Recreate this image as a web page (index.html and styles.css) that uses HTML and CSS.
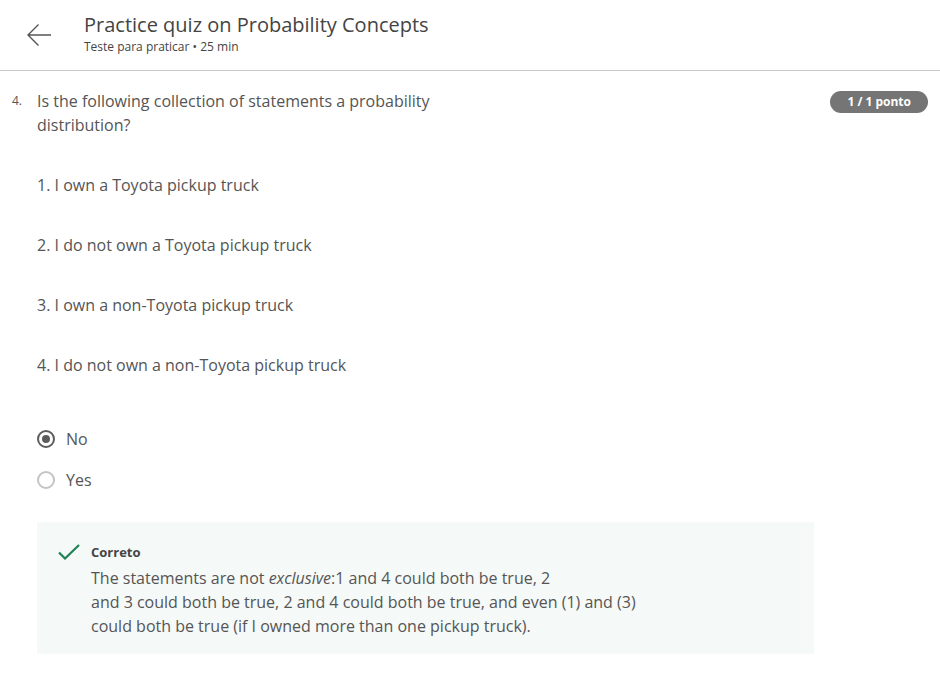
FILE: index.html
```html
<!DOCTYPE html>
<html>
<head>
<meta charset="utf-8">
<link rel="stylesheet" href="styles.css">
</head>
<body>
<header class="top">
  <button class="back" aria-label="Voltar">
    <svg width="26" height="24" viewBox="0 0 26 24"><path d="M25 12H2M12.5 1.5L2 12l10.5 10.5" fill="none" stroke="#555" stroke-width="1.4"/></svg>
  </button>
  <div class="titles">
    <h1 class="title">Practice quiz on Probability Concepts</h1>
    <div class="sub">Teste para praticar • 25 min</div>
  </div>
</header>
<main class="question">
  <div class="qhead">
    <span class="qnum">4.</span>
    <div class="qtext">Is the following collection of statements a probability<br>distribution?</div>
    <span class="badge">1 / 1 ponto</span>
  </div>
  <div class="qbody">
    <p class="stmt">1. I own a Toyota pickup truck</p>
    <p class="stmt">2. I do not own a Toyota pickup truck</p>
    <p class="stmt">3. I own a non-Toyota pickup truck</p>
    <p class="stmt">4. I do not own a non-Toyota pickup truck</p>
    <div class="options">
      <label class="opt"><span class="radio checked"></span><span>No</span></label>
      <label class="opt"><span class="radio"></span><span>Yes</span></label>
    </div>
    <div class="feedback">
      <svg class="check" width="22" height="16" viewBox="0 0 22 16"><path d="M1 8.5l6 6L21 1" fill="none" stroke="#1f8354" stroke-width="2.2"/></svg>
      <div class="fbtext">
        <div class="fbtitle">Correto</div>
        <div class="fbbody">The statements are not <em>exclusive</em>:1 and 4 could both be true, 2<br>and 3 could both be true, 2 and 4 could both be true, and even (1) and (3)<br>could both be true (if I owned more than one pickup truck).</div>
      </div>
    </div>
  </div>
</main>
</body>
</html>
```
FILE: styles.css
```css
html, body {
  margin: 0;
  padding: 0;
  background: #fff;
  font-family: "Open Sans", sans-serif;
  color: #555;
}
.top {
  display: flex;
  align-items: flex-start;
  height: 70px;
  border-bottom: 1px solid #c8c8c8;
}
.back {
  border: 0;
  background: none;
  padding: 0;
  margin: 23px 0 0 26px;
  width: 26px;
  height: 24px;
  display: flex;
}
.titles {
  margin: 11px 0 0 32px;
}
.title {
  margin: 0;
  font-size: 20px;
  font-weight: 400;
  line-height: 28px;
  color: #444;
}
.sub {
  font-size: 12px;
  line-height: 16px;
  color: #444;
  margin-top: 0;
}
.question {
  padding: 0 12px 0 12px;
}
.qhead {
  display: flex;
  align-items: flex-start;
  margin-top: 18px;
}
.qnum {
  width: 25px;
  font-size: 12px;
  line-height: 24px;
  color: #555;
  flex: none;
}
.qtext {
  flex: 1;
  font-size: 16px;
  line-height: 24px;
  color: #555;
}
.badge {
  flex: none;
  margin-top: 2px;
  background: #757575;
  color: #fff;
  font-size: 12px;
  font-weight: 700;
  line-height: 22px;
  height: 22px;
  padding: 0 17px;
  border-radius: 11px;
}
.qbody {
  padding-left: 25px;
}
.stmt {
  margin: 36px 0 0;
  font-size: 16px;
  line-height: 24px;
}
.options {
  margin-top: 50px;
  display: flex;
  flex-direction: column;
  gap: 17px;
}
.opt {
  display: flex;
  align-items: center;
  gap: 11px;
  font-size: 16px;
  line-height: 24px;
}
.radio {
  width: 18px;
  height: 18px;
  border-radius: 50%;
  box-sizing: border-box;
  border: 2px solid #c4c4c4;
  position: relative;
  flex: none;
}
.radio.checked {
  border-color: #5c5c5c;
}
.radio.checked::after {
  content: "";
  position: absolute;
  left: 3px;
  top: 3px;
  width: 8px;
  height: 8px;
  border-radius: 50%;
  background: #5c5c5c;
}
.feedback {
  margin-top: 30px;
  width: 777px;
  box-sizing: border-box;
  background: #f5f9f8;
  display: flex;
  align-items: flex-start;
  padding: 20px 0 16px 21px;
  gap: 11px;
}
.check {
  margin-top: 2px;
  flex: none;
}
.fbtitle {
  font-size: 13px;
  font-weight: 700;
  line-height: 20px;
  color: #444;
}
.fbbody {
  margin-top: 4px;
  font-size: 16px;
  line-height: 24px;
  color: #555;
}
```
